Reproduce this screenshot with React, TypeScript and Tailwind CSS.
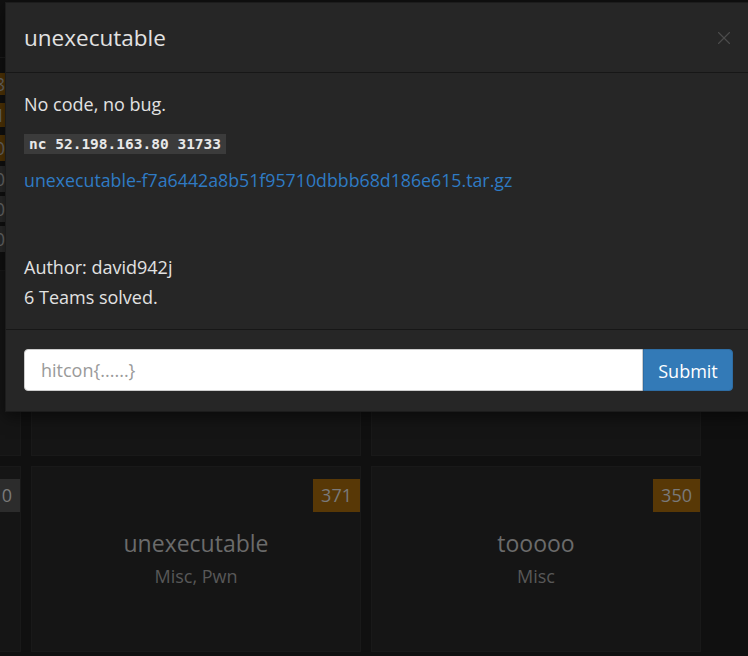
import { X } from "lucide-react";

type Card = { title: string; tags: string; score: number | null; solved?: boolean };

const row1: Card[] = [
  { title: "", tags: "", score: null },
  { title: "", tags: "", score: null },
  { title: "", tags: "", score: null },
];

const row2: Card[] = [
  { title: "", tags: "", score: 0, solved: true },
  { title: "unexecutable", tags: "Misc, Pwn", score: 371 },
  { title: "tooooo", tags: "Misc", score: 350 },
];

const strip = [
  { top: 73, h: 22, c: "bg-[#4f3305]", d: "8" },
  { top: 103, h: 24, c: "bg-[#4f3305]", d: "1" },
  { top: 135, h: 26, c: "bg-[#4f3305]", d: "0" },
  { top: 166, h: 26, c: "bg-[#2a2a2a]", d: "0" },
  { top: 196, h: 26, c: "bg-[#2a2a2a]", d: "0" },
  { top: 226, h: 26, c: "bg-[#2a2a2a]", d: "0" },
  { top: 280, h: 38, c: "bg-[#4f3305]", d: "0" },
];

function BgCard({ card }: { card: Card }) {
  return (
    <div className="relative flex h-[186px] w-[330px] shrink-0 flex-col items-center justify-center border border-[#191919] bg-[#151515]">
      {card.score !== null && (
        <div
          className={`absolute right-0 top-[12px] flex h-[33px] items-center px-[8px] text-[18px] text-[#7a7a7a] ${
            card.solved ? "bg-[#2c2c2c]" : "bg-[#583806]"
          }`}
        >
          {card.score}
        </div>
      )}
      {card.title && (
        <>
          <div className="mt-[-3px] text-[23px] leading-[30px] text-[#6b6b6b]">{card.title}</div>
          <div className="mt-[7px] text-[18px] leading-[22px] text-[#585858]">{card.tags}</div>
        </>
      )}
    </div>
  );
}

export default function App() {
  return (
    <div
      className="relative h-[656px] w-[748px] overflow-hidden bg-[#101010]"
      style={{ fontFamily: '"Open Sans", "Noto Sans", sans-serif' }}
    >
      {/* page behind the backdrop */}
      <div className="relative h-[270px]">
        <div className="absolute left-0 top-[57px] h-px w-[10px] bg-[#1c1c1c]" />
        {strip.map((s) => (
          <div
            key={s.top}
            className={`absolute left-[-20px] flex w-[25px] items-center justify-end overflow-hidden text-[18px] text-[#6a6a6a] ${s.c}`}
            style={{ top: s.top, height: s.h }}
          >
            {s.d}
          </div>
        ))}
      </div>
      <div className="ml-[-309px] flex flex-col gap-[10px]">
        <div className="flex gap-[10px]">
          {row1.map((c, i) => (
            <BgCard key={i} card={c} />
          ))}
        </div>
        <div className="flex gap-[10px]">
          {row2.map((c, i) => (
            <BgCard key={i} card={c} />
          ))}
        </div>
      </div>

      {/* modal */}
      <div className="absolute left-[5px] top-[2px] w-[747px] border border-[#1c1c1c] bg-[#262626] shadow-[0_5px_15px_rgba(0,0,0,0.5)]">
        <div className="flex h-[70px] items-center justify-between border-b border-[#171717] pl-[18px] pr-[16px]">
          <h4 className="text-[22.5px] text-[#e2e2e2]">unexecutable</h4>
          <X className="h-[22px] w-[22px] text-[#4c4c4c]" strokeWidth={1.2} />
        </div>
        <div className="px-[18px] pb-[17px] pt-[16px] text-[18px] leading-[30px] text-[#e2e2e2]">
          <p>No code, no bug.</p>
          <div
            className="mt-[15px] inline-block bg-[#3b3b3b] px-[5px] text-[14.5px] font-bold leading-[20px] text-[#e8e8e8]"
            style={{ fontFamily: '"DejaVu Sans Mono", monospace' }}
          >
            nc 52.198.163.80 31733
          </div>
          <p className="mt-[8px]">
            <a className="text-[17.75px] text-[#2f7bc4]" href="#">
              unexecutable-f7a6442a8b51f95710dbbb68d186e615.tar.gz
            </a>
          </p>
          <p className="mt-[57px]">Author: david942j</p>
          <p>6 Teams solved.</p>
        </div>
        <div className="flex border-t border-[#171717] px-[18px] pb-[20px] pt-[19px]">
          <input
            className="h-[42px] flex-1 rounded-l-[4px] border border-[#cccccc] bg-white px-[16px] text-[18px] text-[#555] outline-none placeholder:text-[#9a9a9a]"
            placeholder="hitcon{......}"
          />
          <button className="h-[42px] w-[90px] rounded-r-[4px] border border-[#2e6da4] bg-[#337ab7] pt-[3px] text-[18px] text-white">
            Submit
          </button>
        </div>
      </div>
    </div>
  );
}
